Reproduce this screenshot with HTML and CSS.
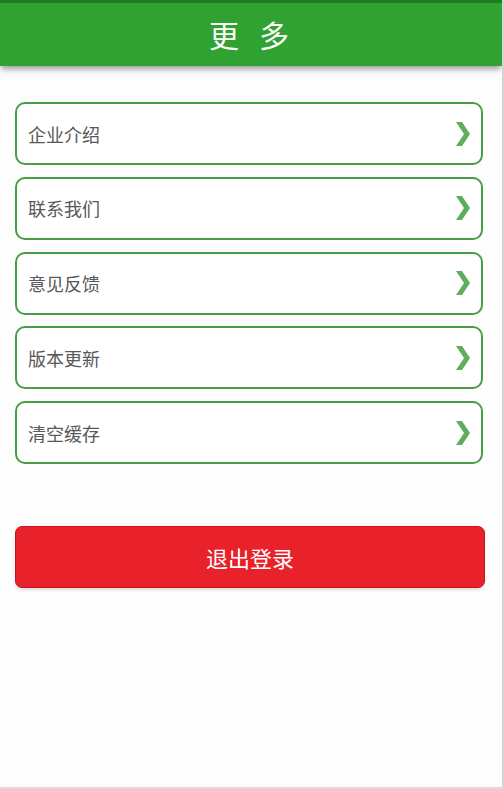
FILE: index.html
```html
<!DOCTYPE html>
<html>
<head>
	<title>更多</title>
	<meta charset="utf-8">
	<link rel="stylesheet" href="styles.css">
</head>
<body>
<div id="page">
	<!-- 标题栏 -->
	<div id="header"><span>更多</span></div>

	<!-- 菜单 -->
	<div class="menu">
		<div class="menuItem"><span>企业介绍</span><svg class="arrow" viewBox="0 0 14 24"><polygon points="0,0 6,0 14,12 6,24 0,24 8,12"/></svg></div>
		<div class="menuItem"><span>联系我们</span><svg class="arrow" viewBox="0 0 14 24"><polygon points="0,0 6,0 14,12 6,24 0,24 8,12"/></svg></div>
		<div class="menuItem"><span>意见反馈</span><svg class="arrow" viewBox="0 0 14 24"><polygon points="0,0 6,0 14,12 6,24 0,24 8,12"/></svg></div>
		<div class="menuItem"><span>版本更新</span><svg class="arrow" viewBox="0 0 14 24"><polygon points="0,0 6,0 14,12 6,24 0,24 8,12"/></svg></div>
		<div class="menuItem"><span>清空缓存</span><svg class="arrow" viewBox="0 0 14 24"><polygon points="0,0 6,0 14,12 6,24 0,24 8,12"/></svg></div>
	</div>

	<button id="logoutBtn">退出登录</button>
</div>
</body>
</html>
```

FILE: styles.css
```css
html,body{
	padding: 0;
	margin: 0;
	height: 100%;
}

body{
	background-color: #fdfdfd;
	font-family: "Noto Sans CJK SC", "Noto Sans", sans-serif;
}

#page{
	box-sizing: border-box;
	height: 100%;
	border-right: 2px solid #d4d4d4;
	border-bottom: 2px solid #dcdcdc;
	overflow: hidden;
}

#header{
	height: 63px;
	border-top: 3px solid #237a26;
	background-color: #2fa232;
	box-shadow: 0 4px 6px -1px #9a9a9a;
	display: flex;
	align-items: center;
	justify-content: center;
	color: #fff;
}
#header span{
	font-size: 30px;
	letter-spacing: 20px;
	margin-right: -20px;
	margin-left: -4px;
	margin-top: -2px;
}

.menu{
	margin: 36px 19px 0 15px;
	display: flex;
	flex-direction: column;
	gap: 11.75px;
}

.menuItem{
	height: 59px;
	border: 2px solid #45a045;
	border-radius: 10px;
	background-color: #fff;
	display: flex;
	align-items: center;
	justify-content: space-between;
	padding: 0 11px 0 11px;
	font-size: 18px;
	color: #585858;
}

.arrow{
	width: 14px;
	height: 24px;
	fill: #5eae5e;
}

#logoutBtn{
	display: block;
	box-sizing: border-box;
	width: 470px;
	height: 62px;
	margin: 62px 0 0 15px;
	border: 1px solid #c9141c;
	border-radius: 7px;
	background-color: #e8212a;
	color: #fff;
	font-family: "Noto Sans CJK SC", sans-serif;
	font-size: 22px;
	box-shadow: 0 3px 4px -2px #ccc;
}
```
